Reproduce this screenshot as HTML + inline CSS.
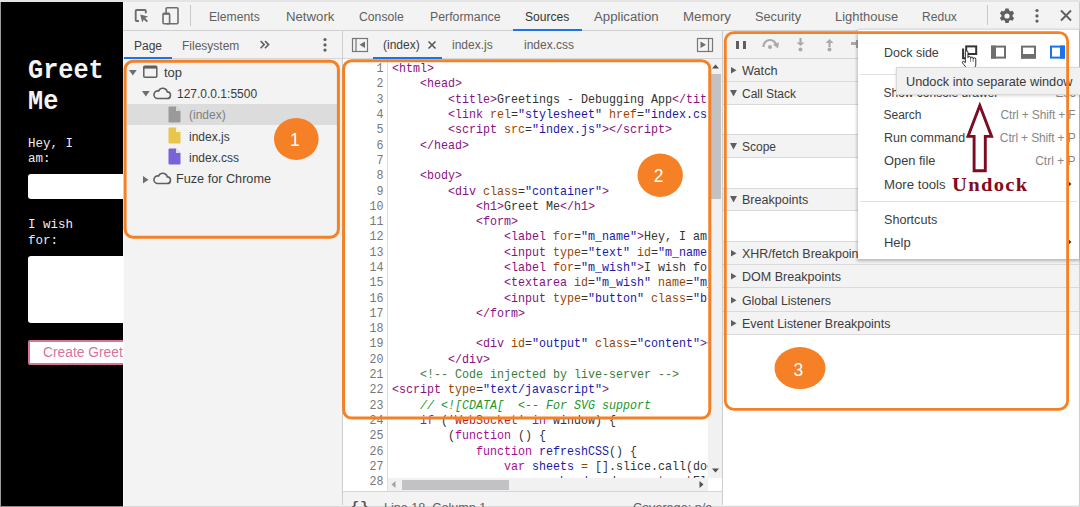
<!DOCTYPE html>
<html><head><meta charset="utf-8"><title>DevTools</title>
<style>html,body{margin:0;padding:0;} body{width:1080px;height:507px;overflow:hidden;position:relative;background:#f3f3f3;font-family:'Liberation Sans', sans-serif;}</style>
</head><body>
<div style="position:absolute;left:0px;top:0px;width:1080px;height:2px;background:#e4e4e4;"></div>
<div style="position:absolute;left:0px;top:2px;width:1px;height:505px;background:#9a9a9a;"></div>
<div style="position:absolute;left:1px;top:2px;width:122px;height:505px;background:#000;"></div>
<div style="position:absolute;left:28px;top:55.58px;font-family:'Liberation Mono', monospace;font-size:27px;line-height:31.05px;color:#f4f4f4;font-weight:bold;white-space:pre;transform:scaleX(0.935);transform-origin:0 0;">Greet</div>
<div style="position:absolute;left:28px;top:87.08px;font-family:'Liberation Mono', monospace;font-size:27px;line-height:31.05px;color:#f4f4f4;font-weight:bold;white-space:pre;transform:scaleX(0.935);transform-origin:0 0;">Me</div>
<div style="position:absolute;left:28px;top:136.78px;font-family:'Liberation Mono', monospace;font-size:12.5px;line-height:14.37px;color:#eee;font-weight:normal;white-space:pre;">Hey, I</div>
<div style="position:absolute;left:28px;top:152.48px;font-family:'Liberation Mono', monospace;font-size:12.5px;line-height:14.37px;color:#eee;font-weight:normal;white-space:pre;">am:</div>
<div style="position:absolute;left:28px;top:174px;width:100px;height:25px;background:#fff;border-radius:3px;"></div>
<div style="position:absolute;left:28px;top:218.48px;font-family:'Liberation Mono', monospace;font-size:12.5px;line-height:14.37px;color:#eee;font-weight:normal;white-space:pre;">I wish</div>
<div style="position:absolute;left:28px;top:234.18px;font-family:'Liberation Mono', monospace;font-size:12.5px;line-height:14.37px;color:#eee;font-weight:normal;white-space:pre;">for:</div>
<div style="position:absolute;left:28px;top:256px;width:100px;height:67px;background:#fff;border-radius:3px;"></div>
<div style="position:absolute;left:28px;top:340px;width:110px;height:25px;box-sizing:border-box;border:2px solid #d9739a;border-radius:2px;background:#fff;"></div>
<div style="position:absolute;left:43px;top:345.08px;font-family:'Liberation Sans', sans-serif;font-size:13.8px;line-height:15.87px;color:#d9739a;font-weight:normal;white-space:pre;">Create Greeting</div>
<div style="position:absolute;left:123px;top:2px;width:957px;height:505px;background:#f3f3f3;"></div>
<div style="position:absolute;left:123px;top:2px;width:1px;height:504px;background:#fafafa;"></div>
<div style="position:absolute;left:123px;top:30px;width:957px;height:1px;background:#d0d0d0;"></div>
<div style="position:absolute;left:1079px;top:2px;width:1px;height:505px;background:#cfcfcf;"></div>
<div style="position:absolute;left:123px;top:506px;width:957px;height:1px;background:#d9d9d9;"></div>
<div style="position:absolute;left:0px;top:506px;width:123px;height:1px;background:#8a8a8a;"></div>
<svg style="position:absolute;left:133px;top:8px;" width="18" height="17" viewBox="0 0 18 17"><path d="M6 13H3.7a1 1 0 0 1-1-1V3a1 1 0 0 1 1-1h8.1a1 1 0 0 1 1 1v2.2" fill="none" stroke="#6e6e6e" stroke-width="1.9"/><path d="M7.2 6.6L15.1 8.5 12.2 10.1 15 12.9 13.6 14.3 10.8 11.5 9.2 14.5z" fill="#6e6e6e"/></svg>
<svg style="position:absolute;left:161px;top:6px;" width="19" height="19" viewBox="0 0 19 19"><rect x="5.1" y="1.8" width="11.9" height="16" rx="1" fill="none" stroke="#6e6e6e" stroke-width="1.6"/><rect x="2" y="7.4" width="6.6" height="10.4" rx="1" fill="#f3f3f3" stroke="#6e6e6e" stroke-width="1.6"/><rect x="2" y="7.2" width="6.6" height="1.6" fill="#6e6e6e"/></svg>
<div style="position:absolute;left:190px;top:5px;width:1px;height:21px;background:#c8c8c8;"></div>
<div style="position:absolute;left:209.29999999999998px;top:10.64px;font-family:'Liberation Sans', sans-serif;font-size:12px;line-height:13.8px;color:#5f5f5f;font-weight:normal;white-space:pre;transform:scaleX(1.014);transform-origin:0 0;">Elements</div>
<div style="position:absolute;left:285.7px;top:10.64px;font-family:'Liberation Sans', sans-serif;font-size:12px;line-height:13.8px;color:#5f5f5f;font-weight:normal;white-space:pre;transform:scaleX(1.100);transform-origin:0 0;">Network</div>
<div style="position:absolute;left:358.9px;top:10.64px;font-family:'Liberation Sans', sans-serif;font-size:12px;line-height:13.8px;color:#5f5f5f;font-weight:normal;white-space:pre;transform:scaleX(1.018);transform-origin:0 0;">Console</div>
<div style="position:absolute;left:429.5px;top:10.64px;font-family:'Liberation Sans', sans-serif;font-size:12px;line-height:13.8px;color:#5f5f5f;font-weight:normal;white-space:pre;transform:scaleX(1.026);transform-origin:0 0;">Performance</div>
<div style="position:absolute;left:524.6px;top:10.64px;font-family:'Liberation Sans', sans-serif;font-size:12px;line-height:13.8px;color:#333;font-weight:normal;white-space:pre;transform:scaleX(1.007);transform-origin:0 0;">Sources</div>
<div style="position:absolute;left:593.6px;top:10.64px;font-family:'Liberation Sans', sans-serif;font-size:12px;line-height:13.8px;color:#5f5f5f;font-weight:normal;white-space:pre;transform:scaleX(1.100);transform-origin:0 0;">Application</div>
<div style="position:absolute;left:683.2px;top:10.64px;font-family:'Liberation Sans', sans-serif;font-size:12px;line-height:13.8px;color:#5f5f5f;font-weight:normal;white-space:pre;transform:scaleX(1.107);transform-origin:0 0;">Memory</div>
<div style="position:absolute;left:754.9000000000001px;top:10.64px;font-family:'Liberation Sans', sans-serif;font-size:12px;line-height:13.8px;color:#5f5f5f;font-weight:normal;white-space:pre;transform:scaleX(1.062);transform-origin:0 0;">Security</div>
<div style="position:absolute;left:834.8000000000001px;top:10.64px;font-family:'Liberation Sans', sans-serif;font-size:12px;line-height:13.8px;color:#5f5f5f;font-weight:normal;white-space:pre;transform:scaleX(1.077);transform-origin:0 0;">Lighthouse</div>
<div style="position:absolute;left:922.2px;top:10.64px;font-family:'Liberation Sans', sans-serif;font-size:12px;line-height:13.8px;color:#5f5f5f;font-weight:normal;white-space:pre;transform:scaleX(1.006);transform-origin:0 0;">Redux</div>
<div style="position:absolute;left:513px;top:29px;width:69px;height:2px;background:#1a73e8;"></div>
<div style="position:absolute;left:987px;top:5px;width:1px;height:20px;background:#c8c8c8;"></div>
<svg style="position:absolute;left:998px;top:7px;" width="18" height="18" viewBox="0 0 18 18"><g transform="translate(9,9)"><path fill="#5f5f5f" d="M-1.6-7.5h3.2l.5 2.1a5 5 0 0 1 1.4.8l2-.7 1.6 2.8-1.6 1.4a5 5 0 0 1 0 1.6l1.6 1.4-1.6 2.8-2-.7a5 5 0 0 1-1.4.8l-.5 2.1h-3.2l-.5-2.1a5 5 0 0 1-1.4-.8l-2 .7-1.6-2.8 1.6-1.4a5 5 0 0 1 0-1.6l-1.6-1.4 1.6-2.8 2 .7a5 5 0 0 1 1.4-.8z"/><circle r="2.6" fill="#f3f3f3"/></g></svg>
<svg style="position:absolute;left:1034px;top:8px;" width="6" height="16" viewBox="0 0 6 16"><circle cx="3" cy="2.5" r="1.6" fill="#5f5f5f"/><circle cx="3" cy="7.9" r="1.6" fill="#5f5f5f"/><circle cx="3" cy="13.1" r="1.6" fill="#5f5f5f"/></svg>
<svg style="position:absolute;left:1059px;top:9px;" width="14" height="14" viewBox="0 0 14 14"><path d="M2 1.5l10 10M12 1.5l-10 10" stroke="#5f5f5f" stroke-width="1.9"/></svg>
<div style="position:absolute;left:123px;top:58px;width:219px;height:1px;background:#d6d6d6;"></div>
<div style="position:absolute;left:342px;top:30px;width:1px;height:475px;background:#cdcdcd;"></div>
<div style="position:absolute;left:134px;top:39.74px;font-family:'Liberation Sans', sans-serif;font-size:12px;line-height:13.8px;color:#3d3d3d;font-weight:normal;white-space:pre;">Page</div>
<div style="position:absolute;left:182px;top:39.74px;font-family:'Liberation Sans', sans-serif;font-size:12px;line-height:13.8px;color:#5f5f5f;font-weight:normal;white-space:pre;">Filesystem</div>
<svg style="position:absolute;left:258px;top:39px;" width="14" height="12" viewBox="0 0 14 12"><path d="M2.6 2l3.6 3.6-3.6 3.6M7 2l3.6 3.6-3.6 3.6" fill="none" stroke="#5f5f5f" stroke-width="1.6"/></svg>
<svg style="position:absolute;left:322px;top:37px;" width="6" height="16" viewBox="0 0 6 16"><circle cx="3" cy="2.5" r="1.6" fill="#5f5f5f"/><circle cx="3" cy="7.9" r="1.6" fill="#5f5f5f"/><circle cx="3" cy="13.1" r="1.6" fill="#5f5f5f"/></svg>
<div style="position:absolute;left:124px;top:57px;width:48px;height:2px;background:#1a73e8;"></div>
<svg style="position:absolute;left:129.1px;top:69.9px;" width="8.7" height="6.5" viewBox="0 0 8.7 6.5"><path d="M0 0H7.7L3.85 5.5z" fill="#6e6e6e"/></svg>
<svg style="position:absolute;left:142px;top:65px;" width="17" height="14" viewBox="0 0 17 14"><rect x="1.8" y="1.3" width="13" height="11" rx="1" fill="none" stroke="#5f5f5f" stroke-width="1.5"/><rect x="1.8" y="1" width="13" height="2.6" fill="#5f5f5f"/></svg>
<div style="position:absolute;left:163.5px;top:67.14px;font-family:'Liberation Sans', sans-serif;font-size:12px;line-height:13.8px;color:#3a3a3a;font-weight:normal;white-space:pre;transform:scaleX(1.080);transform-origin:0 0;">top</div>
<svg style="position:absolute;left:142px;top:91px;" width="8.7" height="6.5" viewBox="0 0 8.7 6.5"><path d="M0 0H7.7L3.85 5.5z" fill="#6e6e6e"/></svg>
<svg style="position:absolute;left:152px;top:87px;" width="21" height="14" viewBox="0 0 21 14"><path d="M5 11.5h10a3.3 3.3 0 0 0 .3-6.6A4.6 4.6 0 0 0 6.6 4 3.8 3.8 0 0 0 5 11.5z" fill="none" stroke="#5f5f5f" stroke-width="1.6"/></svg>
<div style="position:absolute;left:177px;top:87.94px;font-family:'Liberation Sans', sans-serif;font-size:12px;line-height:13.8px;color:#3a3a3a;font-weight:normal;white-space:pre;">127.0.0.1:5500</div>
<div style="position:absolute;left:127px;top:104px;width:210px;height:21px;background:#dcdcdc;"></div>
<svg style="position:absolute;left:168px;top:106px;" width="14" height="17" viewBox="0 0 14 17"><path d="M0.5 1.5a1 1 0 0 1 1-1H8L12.5 5V15.5a1 1 0 0 1-1 1h-10a1 1 0 0 1-1-1z" fill="#9a999b"/><path d="M8 0.5V5H12.5z" fill="#d6d6d6"/></svg>
<div style="position:absolute;left:189px;top:109.34px;font-family:'Liberation Sans', sans-serif;font-size:12px;line-height:13.8px;color:#808080;font-weight:normal;white-space:pre;">(index)</div>
<svg style="position:absolute;left:168px;top:127px;" width="14" height="17" viewBox="0 0 14 17"><path d="M0.5 1.5a1 1 0 0 1 1-1H8L12.5 5V15.5a1 1 0 0 1-1 1h-10a1 1 0 0 1-1-1z" fill="#e8c64c"/><path d="M8 0.5V5H12.5z" fill="#fbf3d0"/></svg>
<div style="position:absolute;left:189px;top:130.64px;font-family:'Liberation Sans', sans-serif;font-size:12px;line-height:13.8px;color:#3a3a3a;font-weight:normal;white-space:pre;">index.js</div>
<svg style="position:absolute;left:168px;top:148px;" width="14" height="17" viewBox="0 0 14 17"><path d="M0.5 1.5a1 1 0 0 1 1-1H8L12.5 5V15.5a1 1 0 0 1-1 1h-10a1 1 0 0 1-1-1z" fill="#7a62d8"/><path d="M8 0.5V5H12.5z" fill="#e0d8f6"/></svg>
<div style="position:absolute;left:189px;top:151.94px;font-family:'Liberation Sans', sans-serif;font-size:12px;line-height:13.8px;color:#3a3a3a;font-weight:normal;white-space:pre;">index.css</div>
<svg style="position:absolute;left:143px;top:175.5px;" width="6.5" height="8.5" viewBox="0 0 6.5 8.5"><path d="M0 0L5.5 3.75L0 7.5z" fill="#6e6e6e"/></svg>
<svg style="position:absolute;left:152px;top:172px;" width="21" height="14" viewBox="0 0 21 14"><path d="M5 11.5h10a3.3 3.3 0 0 0 .3-6.6A4.6 4.6 0 0 0 6.6 4 3.8 3.8 0 0 0 5 11.5z" fill="none" stroke="#5f5f5f" stroke-width="1.6"/></svg>
<div style="position:absolute;left:176.4px;top:172.94px;font-family:'Liberation Sans', sans-serif;font-size:12px;line-height:13.8px;color:#3a3a3a;font-weight:normal;white-space:pre;transform:scaleX(1.055);transform-origin:0 0;">Fuze for Chrome</div>
<div style="position:absolute;left:343px;top:58px;width:379px;height:1px;background:#d6d6d6;"></div>
<svg style="position:absolute;left:351px;top:37px;" width="18" height="16" viewBox="0 0 18 16"><rect x="1.5" y="1.5" width="15" height="13" fill="none" stroke="#777" stroke-width="1.2"/><path d="M5 1.5v13" stroke="#777" stroke-width="1.2"/><path d="M14 4.5v6.5L8.5 7.75z" fill="#6e6e6e"/></svg>
<div style="position:absolute;left:383px;top:39.24px;font-family:'Liberation Sans', sans-serif;font-size:12px;line-height:13.8px;color:#3d3d3d;font-weight:normal;white-space:pre;">(index)</div>
<svg style="position:absolute;left:427px;top:40px;" width="10" height="10" viewBox="0 0 10 10"><path d="M1.5 1.5l7 7M8.5 1.5l-7 7" stroke="#555" stroke-width="1.5"/></svg>
<div style="position:absolute;left:452px;top:39.24px;font-family:'Liberation Sans', sans-serif;font-size:12px;line-height:13.8px;color:#5f5f5f;font-weight:normal;white-space:pre;">index.js</div>
<div style="position:absolute;left:524px;top:39.24px;font-family:'Liberation Sans', sans-serif;font-size:12px;line-height:13.8px;color:#5f5f5f;font-weight:normal;white-space:pre;">index.css</div>
<div style="position:absolute;left:373px;top:57px;width:69px;height:2px;background:#1a73e8;"></div>
<svg style="position:absolute;left:696px;top:37px;" width="18" height="16" viewBox="0 0 18 16"><rect x="1.5" y="1.5" width="15" height="13" fill="none" stroke="#777" stroke-width="1.2"/><path d="M12.5 1.5v13" stroke="#777" stroke-width="1.2"/><path d="M4.5 4.5v6.5L10 7.75z" fill="#6e6e6e"/></svg>
<div style="position:absolute;left:722px;top:30px;width:1px;height:475px;background:#cdcdcd;"></div>
<div style="position:absolute;left:343px;top:59px;width:379px;height:432px;background:#fff;"></div>
<div style="position:absolute;left:387px;top:59px;width:1px;height:432px;background:#dedede;"></div>
<div style="position:absolute;left:343px;top:491px;width:379px;height:1px;background:#d6d6d6;"></div>
<div style="position:absolute;left:343px;top:492px;width:379px;height:13px;background:#f3f3f3;"></div>
<div style="position:absolute;left:343px;top:61.15px;width:40.5px;text-align:right;font-family:'Liberation Mono', monospace;font-size:13.5px;line-height:15.3px;color:#787878;white-space:pre;transform:scaleX(0.8642);transform-origin:100% 0">1<br>2<br>3<br>4<br>5<br>6<br>7<br>8<br>9<br>10<br>11<br>12<br>13<br>14<br>15<br>16<br>17<br>18<br>19<br>20<br>21<br>22<br>23<br>24<br>25<br>26<br>27<br>28</div>
<div style="position:absolute;left:388px;top:59px;width:320px;height:419px;overflow:hidden"><div style="position:absolute;left:4px;top:2.15px;font-family:'Liberation Mono', monospace;font-size:13.5px;line-height:15.3px;color:#222;white-space:pre;transform:scaleX(0.8642);transform-origin:0 0"><span style="color:#881280;">&lt;html&gt;</span><br><span style="color:#333;">    </span><span style="color:#881280;">&lt;head&gt;</span><br><span style="color:#333;">        </span><span style="color:#881280;">&lt;title&gt;</span><span style="color:#333;">Greetings - Debugging App</span><span style="color:#881280;">&lt;/title&gt;</span><br><span style="color:#333;">        </span><span style="color:#881280;">&lt;link </span><span style="color:#994500;">rel</span><span style="color:#333;">=</span><span style="color:#1a1aa6;">&quot;stylesheet&quot;</span><span style="color:#333;"> </span><span style="color:#994500;">href</span><span style="color:#333;">=</span><span style="color:#1a1aa6;">&quot;index.css&quot;</span><span style="color:#881280;">&gt;</span><br><span style="color:#333;">        </span><span style="color:#881280;">&lt;script </span><span style="color:#994500;">src</span><span style="color:#333;">=</span><span style="color:#1a1aa6;">&quot;index.js&quot;</span><span style="color:#881280;">&gt;&lt;/script&gt;</span><br><span style="color:#333;">    </span><span style="color:#881280;">&lt;/head&gt;</span><br> <br><span style="color:#333;">    </span><span style="color:#881280;">&lt;body&gt;</span><br><span style="color:#333;">        </span><span style="color:#881280;">&lt;div </span><span style="color:#994500;">class</span><span style="color:#333;">=</span><span style="color:#1a1aa6;">&quot;container&quot;</span><span style="color:#881280;">&gt;</span><br><span style="color:#333;">            </span><span style="color:#881280;">&lt;h1&gt;</span><span style="color:#333;">Greet Me</span><span style="color:#881280;">&lt;/h1&gt;</span><br><span style="color:#333;">            </span><span style="color:#881280;">&lt;form&gt;</span><br><span style="color:#333;">                </span><span style="color:#881280;">&lt;label </span><span style="color:#994500;">for</span><span style="color:#333;">=</span><span style="color:#1a1aa6;">&quot;m_name&quot;</span><span style="color:#881280;">&gt;</span><span style="color:#333;">Hey, I am:</span><span style="color:#881280;">&lt;/label&gt;</span><br><span style="color:#333;">                </span><span style="color:#881280;">&lt;input </span><span style="color:#994500;">type</span><span style="color:#333;">=</span><span style="color:#1a1aa6;">&quot;text&quot;</span><span style="color:#333;"> </span><span style="color:#994500;">id</span><span style="color:#333;">=</span><span style="color:#1a1aa6;">&quot;m_name&quot;</span><span style="color:#881280;">&gt;</span><br><span style="color:#333;">                </span><span style="color:#881280;">&lt;label </span><span style="color:#994500;">for</span><span style="color:#333;">=</span><span style="color:#1a1aa6;">&quot;m_wish&quot;</span><span style="color:#881280;">&gt;</span><span style="color:#333;">I wish for:</span><span style="color:#881280;">&lt;/label&gt;</span><br><span style="color:#333;">                </span><span style="color:#881280;">&lt;textarea </span><span style="color:#994500;">id</span><span style="color:#333;">=</span><span style="color:#1a1aa6;">&quot;m_wish&quot;</span><span style="color:#333;"> </span><span style="color:#994500;">name</span><span style="color:#333;">=</span><span style="color:#1a1aa6;">&quot;m_wish&quot;</span><span style="color:#881280;">&gt;</span><br><span style="color:#333;">                </span><span style="color:#881280;">&lt;input </span><span style="color:#994500;">type</span><span style="color:#333;">=</span><span style="color:#1a1aa6;">&quot;button&quot;</span><span style="color:#333;"> </span><span style="color:#994500;">class</span><span style="color:#333;">=</span><span style="color:#1a1aa6;">&quot;btn&quot;</span><span style="color:#881280;">&gt;</span><br><span style="color:#333;">            </span><span style="color:#881280;">&lt;/form&gt;</span><br> <br><span style="color:#333;">            </span><span style="color:#881280;">&lt;div </span><span style="color:#994500;">id</span><span style="color:#333;">=</span><span style="color:#1a1aa6;">&quot;output&quot;</span><span style="color:#333;"> </span><span style="color:#994500;">class</span><span style="color:#333;">=</span><span style="color:#1a1aa6;">&quot;content&quot;</span><span style="color:#881280;">&gt;</span><span style="color:#881280;">&lt;/div&gt;</span><br><span style="color:#333;">        </span><span style="color:#881280;">&lt;/div&gt;</span><br><span style="color:#333;">    </span><span style="color:#3a7d3c;">&lt;!-- Code injected by live-server --&gt;</span><br><span style="color:#881280;">&lt;script </span><span style="color:#994500;">type</span><span style="color:#333;">=</span><span style="color:#1a1aa6;">&quot;text/javascript&quot;</span><span style="color:#881280;">&gt;</span><br><span style="color:#333;">    </span><span style="color:#23942a;font-style:italic">// &lt;![CDATA[  &lt;-- For SVG support</span><br><span style="color:#333;">    </span><span style="color:#aa0d91;">if</span><span style="color:#333;"> (</span><span style="color:#c41a16;">&#x27;WebSocket&#x27;</span><span style="color:#333;"> </span><span style="color:#aa0d91;">in</span><span style="color:#333;"> window) {</span><br><span style="color:#333;">        (</span><span style="color:#aa0d91;">function</span><span style="color:#333;"> () {</span><br><span style="color:#333;">            </span><span style="color:#aa0d91;">function</span><span style="color:#333;"> </span><span style="color:#1a1aa6;">refreshCSS</span><span style="color:#333;">() {</span><br><span style="color:#333;">                </span><span style="color:#aa0d91;">var</span><span style="color:#333;"> </span><span style="color:#1a1aa6;">sheets</span><span style="color:#333;"> </span><span style="color:#994500;">=</span><span style="color:#333;"> [].slice.call(document.getElementsByTagName(</span><span style="color:#c41a16;">&quot;link&quot;</span><span style="color:#333;">));</span><br><span style="color:#333;">                    </span><span style="color:#aa0d91;">var</span><span style="color:#333;"> </span><span style="color:#1a1aa6;">head</span><span style="color:#333;"> </span><span style="color:#994500;">=</span><span style="color:#333;"> document.getElementsByTagName(</span><span style="color:#c41a16;">&quot;head&quot;</span><span style="color:#333;">)[0];</span></div></div>
<div style="position:absolute;left:708px;top:59px;width:14px;height:419px;background:#f1f1f1;"></div>
<div style="position:absolute;left:711px;top:74px;width:10px;height:125px;background:#c2c1c4;"></div>
<svg style="position:absolute;left:712px;top:64px;" width="7" height="5" viewBox="0 0 7 5"><path d="M0 4.5L3.5 0.5 7 4.5z" fill="#505050"/></svg>
<svg style="position:absolute;left:712px;top:468px;" width="7" height="5" viewBox="0 0 7 5"><path d="M0 0.5L3.5 4.5 7 0.5z" fill="#505050"/></svg>
<div style="position:absolute;left:388px;top:478px;width:320px;height:13px;background:#f1f1f1;"></div>
<div style="position:absolute;left:402px;top:480px;width:106.5px;height:10px;background:#c2c1c4;"></div>
<svg style="position:absolute;left:391px;top:481px;" width="5" height="7" viewBox="0 0 5 7"><path d="M4.5 0L0.5 3.5 4.5 7z" fill="#a3a3a3"/></svg>
<svg style="position:absolute;left:699px;top:481px;" width="5" height="7" viewBox="0 0 5 7"><path d="M0.5 0L4.5 3.5 0.5 7z" fill="#505050"/></svg>
<div style="position:absolute;left:708px;top:478px;width:14px;height:13px;background:#fff;"></div>
<div style="position:absolute;left:351px;top:498.94px;font-family:'Liberation Mono', monospace;font-size:13.5px;line-height:15.52px;color:#555;font-weight:bold;white-space:pre;letter-spacing:1.2px;">{}</div>
<div style="position:absolute;left:384px;top:501.94px;font-family:'Liberation Sans', sans-serif;font-size:12px;line-height:13.8px;color:#5f5f5f;font-weight:normal;white-space:pre;transform:scaleX(1.050);transform-origin:0 0;">Line 18, Column 1</div>
<div style="position:absolute;left:632.5px;top:501.94px;font-family:'Liberation Sans', sans-serif;font-size:12px;line-height:13.8px;color:#5f5f5f;font-weight:normal;white-space:pre;transform:scaleX(1.050);transform-origin:0 0;">Coverage: n/a</div>
<div style="position:absolute;left:736px;top:40.7px;width:3px;height:8px;background:#5f5f5f;"></div>
<div style="position:absolute;left:742.5px;top:40.7px;width:3px;height:8px;background:#5f5f5f;"></div>
<svg style="position:absolute;left:760px;top:37px;" width="22" height="14" viewBox="0 0 22 14"><path d="M3.5 10a6.5 6.5 0 0 1 13-1" fill="none" stroke="#aaa" stroke-width="2.2"/><path d="M13 7.5l5 4 1-6z" fill="#aaa"/><circle cx="10" cy="10" r="2" fill="#aaa"/></svg>
<svg style="position:absolute;left:795px;top:37px;" width="11" height="16" viewBox="0 0 11 16"><path d="M5.5 1v6" stroke="#aaa" stroke-width="2.2"/><path d="M1.5 5.5h8l-4 3.5z" fill="#aaa"/><circle cx="5.5" cy="12.6" r="2" fill="#aaa"/></svg>
<svg style="position:absolute;left:824px;top:37px;" width="11" height="16" viewBox="0 0 11 16"><path d="M5.5 10V4" stroke="#aaa" stroke-width="2.2"/><path d="M1.5 6h8l-4-4z" fill="#aaa"/><circle cx="5.5" cy="12.6" r="2" fill="#aaa"/></svg>
<div style="position:absolute;left:851.4px;top:42px;width:5px;height:3px;background:#aaa;"></div>
<div style="position:absolute;left:856px;top:40.2px;width:2px;height:7.5px;background:#a0a0a0;"></div>
<div style="position:absolute;left:723px;top:58px;width:356px;height:1px;background:#d6d6d6;"></div>
<div style="position:absolute;left:723px;top:81px;width:356px;height:1px;background:#dadada;"></div>
<svg style="position:absolute;left:731px;top:67px;" width="6.5" height="7.5" viewBox="0 0 6.5 7.5"><path d="M0 0L5.5 3.25L0 6.5z" fill="#5f5f5f"/></svg>
<div style="position:absolute;left:742px;top:64.64px;font-family:'Liberation Sans', sans-serif;font-size:12px;line-height:13.8px;color:#3d3d3d;font-weight:normal;white-space:pre;transform:scaleX(1.060);transform-origin:0 0;">Watch</div>
<div style="position:absolute;left:723px;top:104px;width:356px;height:1px;background:#dadada;"></div>
<svg style="position:absolute;left:730.3px;top:90px;" width="8" height="7.5" viewBox="0 0 8 7.5"><path d="M0 0H7L3.5 6.5z" fill="#5f5f5f"/></svg>
<div style="position:absolute;left:723px;top:105px;width:356px;height:29px;background:#fff;"></div>
<div style="position:absolute;left:723px;top:134px;width:356px;height:1px;background:#dadada;"></div>
<div style="position:absolute;left:742px;top:87.64px;font-family:'Liberation Sans', sans-serif;font-size:12px;line-height:13.8px;color:#3d3d3d;font-weight:normal;white-space:pre;">Call Stack</div>
<div style="position:absolute;left:723px;top:157px;width:356px;height:1px;background:#dadada;"></div>
<svg style="position:absolute;left:730.3px;top:143px;" width="8" height="7.5" viewBox="0 0 8 7.5"><path d="M0 0H7L3.5 6.5z" fill="#5f5f5f"/></svg>
<div style="position:absolute;left:723px;top:158px;width:356px;height:30px;background:#fff;"></div>
<div style="position:absolute;left:723px;top:188px;width:356px;height:1px;background:#dadada;"></div>
<div style="position:absolute;left:742px;top:140.64px;font-family:'Liberation Sans', sans-serif;font-size:12px;line-height:13.8px;color:#3d3d3d;font-weight:normal;white-space:pre;">Scope</div>
<div style="position:absolute;left:723px;top:210px;width:356px;height:1px;background:#dadada;"></div>
<svg style="position:absolute;left:730.3px;top:196px;" width="8" height="7.5" viewBox="0 0 8 7.5"><path d="M0 0H7L3.5 6.5z" fill="#5f5f5f"/></svg>
<div style="position:absolute;left:723px;top:211px;width:356px;height:30px;background:#fff;"></div>
<div style="position:absolute;left:723px;top:241px;width:356px;height:1px;background:#dadada;"></div>
<div style="position:absolute;left:742px;top:193.64px;font-family:'Liberation Sans', sans-serif;font-size:12px;line-height:13.8px;color:#3d3d3d;font-weight:normal;white-space:pre;transform:scaleX(1.045);transform-origin:0 0;">Breakpoints</div>
<div style="position:absolute;left:723px;top:264px;width:356px;height:1px;background:#dadada;"></div>
<svg style="position:absolute;left:731px;top:250px;" width="6.5" height="7.5" viewBox="0 0 6.5 7.5"><path d="M0 0L5.5 3.25L0 6.5z" fill="#5f5f5f"/></svg>
<div style="position:absolute;left:742px;top:247.64px;font-family:'Liberation Sans', sans-serif;font-size:12px;line-height:13.8px;color:#3d3d3d;font-weight:normal;white-space:pre;transform:scaleX(1.040);transform-origin:0 0;">XHR/fetch Breakpoints</div>
<div style="position:absolute;left:723px;top:287px;width:356px;height:1px;background:#dadada;"></div>
<svg style="position:absolute;left:731px;top:273px;" width="6.5" height="7.5" viewBox="0 0 6.5 7.5"><path d="M0 0L5.5 3.25L0 6.5z" fill="#5f5f5f"/></svg>
<div style="position:absolute;left:742px;top:270.64px;font-family:'Liberation Sans', sans-serif;font-size:12px;line-height:13.8px;color:#3d3d3d;font-weight:normal;white-space:pre;transform:scaleX(1.045);transform-origin:0 0;">DOM Breakpoints</div>
<div style="position:absolute;left:723px;top:311px;width:356px;height:1px;background:#dadada;"></div>
<svg style="position:absolute;left:731px;top:297px;" width="6.5" height="7.5" viewBox="0 0 6.5 7.5"><path d="M0 0L5.5 3.25L0 6.5z" fill="#5f5f5f"/></svg>
<div style="position:absolute;left:742px;top:294.64px;font-family:'Liberation Sans', sans-serif;font-size:12px;line-height:13.8px;color:#3d3d3d;font-weight:normal;white-space:pre;transform:scaleX(1.025);transform-origin:0 0;">Global Listeners</div>
<div style="position:absolute;left:723px;top:334px;width:356px;height:1px;background:#dadada;"></div>
<svg style="position:absolute;left:731px;top:320px;" width="6.5" height="7.5" viewBox="0 0 6.5 7.5"><path d="M0 0L5.5 3.25L0 6.5z" fill="#5f5f5f"/></svg>
<div style="position:absolute;left:742px;top:317.64px;font-family:'Liberation Sans', sans-serif;font-size:12px;line-height:13.8px;color:#3d3d3d;font-weight:normal;white-space:pre;transform:scaleX(1.035);transform-origin:0 0;">Event Listener Breakpoints</div>
<div style="position:absolute;left:723px;top:335px;width:356px;height:170px;background:#fff;"></div>
<div style="position:absolute;left:858px;top:30px;width:221px;height:229px;background:#fff;box-shadow:0 1px 3px 1px rgba(0,0,0,0.25);"></div>
<div style="position:absolute;left:883.5px;top:47.04px;font-family:'Liberation Sans', sans-serif;font-size:12px;line-height:13.8px;color:#3d3d3d;font-weight:normal;white-space:pre;transform:scaleX(1.040);transform-origin:0 0;">Dock side</div>
<svg style="position:absolute;left:961px;top:44px;" width="18" height="16" viewBox="0 0 18 16"><rect x="5.2" y="2.4" width="10" height="7.6" fill="none" stroke="#333" stroke-width="2"/><path d="M2.1 4.5v9.8h5" fill="none" stroke="#333" stroke-width="2"/></svg>
<svg style="position:absolute;left:990px;top:44px;" width="17" height="16" viewBox="0 0 17 16"><rect x="2" y="2.6" width="13" height="11" fill="none" stroke="#6e6e6e" stroke-width="2"/><rect x="1" y="1.6" width="5" height="13" fill="#6e6e6e"/></svg>
<svg style="position:absolute;left:1019.5px;top:44px;" width="17" height="16" viewBox="0 0 17 16"><rect x="2" y="2.6" width="13" height="11" fill="none" stroke="#6e6e6e" stroke-width="2"/><rect x="1" y="10" width="15" height="4.6" fill="#6e6e6e"/></svg>
<svg style="position:absolute;left:1049px;top:44px;" width="17" height="16" viewBox="0 0 17 16"><rect x="2" y="2.6" width="13" height="11" fill="none" stroke="#1a73e8" stroke-width="2"/><rect x="11" y="1.6" width="5" height="13" fill="#1a73e8"/></svg>
<svg style="position:absolute;left:960.5px;top:49.5px;" width="17" height="21" viewBox="0 0 17 21"><g transform="scale(0.87,0.855)"><path d="M5 2.6a1.5 1.5 0 0 1 3 0V9a1.5 1.5 0 0 1 3 0v.8a1.5 1.5 0 0 1 3 0v.8a1.5 1.5 0 0 1 3 0V16.5c0 2.6-1.2 4.4-2.6 5.3H7.2C6 20.6 3.6 17.6 1.8 15.2 1 14 2.1 12.6 3.4 13.5L5 14.8z" fill="#fff" stroke="#222" stroke-width="1.1" stroke-linejoin="round"/><path d="M11 9.8v4M14 10.6v3.4" stroke="#444" stroke-width="0.8"/></g></svg>
<div style="position:absolute;left:860px;top:74px;width:217px;height:1px;background:#e2e2e2;"></div>
<div style="position:absolute;left:883.5px;top:86.74px;font-family:'Liberation Sans', sans-serif;font-size:12px;line-height:13.8px;color:#3d3d3d;font-weight:normal;white-space:pre;">Show console drawer</div>
<div style="position:absolute;left:0px;top:86.74px;font-family:'Liberation Sans', sans-serif;font-size:12px;line-height:13.8px;color:#888;font-weight:normal;white-space:pre;left:auto;right:4.5px;">Esc</div>
<div style="position:absolute;left:883.5px;top:109.24px;font-family:'Liberation Sans', sans-serif;font-size:12px;line-height:13.8px;color:#3d3d3d;font-weight:normal;white-space:pre;">Search</div>
<div style="position:absolute;left:883.5px;top:132.44px;font-family:'Liberation Sans', sans-serif;font-size:12px;line-height:13.8px;color:#3d3d3d;font-weight:normal;white-space:pre;transform:scaleX(1.040);transform-origin:0 0;">Run command</div>
<div style="position:absolute;left:883.5px;top:155.34px;font-family:'Liberation Sans', sans-serif;font-size:12px;line-height:13.8px;color:#3d3d3d;font-weight:normal;white-space:pre;transform:scaleX(1.070);transform-origin:0 0;">Open file</div>
<div style="position:absolute;left:883.5px;top:179.14px;font-family:'Liberation Sans', sans-serif;font-size:12px;line-height:13.8px;color:#3d3d3d;font-weight:normal;white-space:pre;transform:scaleX(1.100);transform-origin:0 0;">More tools</div>
<div style="position:absolute;left:0px;top:109.24px;font-family:'Liberation Sans', sans-serif;font-size:12px;line-height:13.8px;color:#888;font-weight:normal;white-space:pre;left:auto;right:4.5px;letter-spacing:-0.15px;">Ctrl + Shift + F</div>
<div style="position:absolute;left:0px;top:132.44px;font-family:'Liberation Sans', sans-serif;font-size:12px;line-height:13.8px;color:#888;font-weight:normal;white-space:pre;left:auto;right:4.5px;letter-spacing:-0.15px;">Ctrl + Shift + P</div>
<div style="position:absolute;left:0px;top:155.34px;font-family:'Liberation Sans', sans-serif;font-size:12px;line-height:13.8px;color:#888;font-weight:normal;white-space:pre;left:auto;right:4.5px;">Ctrl + P</div>
<svg style="position:absolute;left:1068px;top:181px;" width="4" height="6" viewBox="0 0 4 6"><path d="M0 0l3.5 3-3.5 3z" fill="#333"/></svg>
<div style="position:absolute;left:860px;top:201px;width:217px;height:1px;background:#e2e2e2;"></div>
<div style="position:absolute;left:883.5px;top:213.74px;font-family:'Liberation Sans', sans-serif;font-size:12px;line-height:13.8px;color:#3d3d3d;font-weight:normal;white-space:pre;transform:scaleX(1.050);transform-origin:0 0;">Shortcuts</div>
<div style="position:absolute;left:883.5px;top:236.64px;font-family:'Liberation Sans', sans-serif;font-size:12px;line-height:13.8px;color:#3d3d3d;font-weight:normal;white-space:pre;transform:scaleX(1.080);transform-origin:0 0;">Help</div>
<svg style="position:absolute;left:1068px;top:238.5px;" width="4" height="6" viewBox="0 0 4 6"><path d="M0 0l3.5 3-3.5 3z" fill="#333"/></svg>
<div style="position:absolute;left:895.5px;top:67px;width:200px;height:28px;box-sizing:border-box;background:#f1f1f2;border:1px solid #d9d9d9;box-shadow:0 1px 3px rgba(0,0,0,0.15);"></div>
<div style="position:absolute;left:905.5px;top:75.42px;font-family:'Liberation Sans', sans-serif;font-size:13px;line-height:14.95px;color:#3a3a3a;font-weight:normal;white-space:pre;transform:scaleX(0.980);transform-origin:0 0;">Undock into separate window</div>
<svg style="position:absolute;left:0px;top:0px;pointer-events:none" width="1080" height="507" viewBox="0 0 1080 507">
<rect x="125.1" y="61.3" width="213.3" height="175.9" rx="8" fill="none" stroke="#f58025" stroke-width="3"/>
<rect x="343.6" y="60.7" width="366.2" height="357.4" rx="8" fill="none" stroke="#f58025" stroke-width="3"/>
<rect x="725.3" y="32.6" width="342.3" height="376.7" rx="8.5" fill="none" stroke="#f58025" stroke-width="2.8"/>
<ellipse cx="296.3" cy="138.9" rx="22.3" ry="21" fill="#f58025"/>
<ellipse cx="660.2" cy="175.2" rx="22.7" ry="21.7" fill="#f58025"/>
<ellipse cx="800" cy="368.1" rx="25.5" ry="21" fill="#f58025"/>
<path d="M979.8 105.6 L991.6 136.4 H985.3 V170.8 H974.1 V136.4 H968 Z" fill="none" stroke="#7d0b22" stroke-width="2.9" stroke-linejoin="miter" stroke-miterlimit="6"/>
</svg>
<div style="position:absolute;left:279.9px;top:129.5px;width:30px;height:20px;text-align:center;font-family:'Liberation Sans', sans-serif;font-size:17.5px;line-height:20px;color:#fff">1</div>
<div style="position:absolute;left:643.7px;top:165.6px;width:30px;height:20px;text-align:center;font-family:'Liberation Sans', sans-serif;font-size:17.5px;line-height:20px;color:#fff">2</div>
<div style="position:absolute;left:783.4px;top:359.7px;width:30px;height:20px;text-align:center;font-family:'Liberation Sans', sans-serif;font-size:17.5px;line-height:20px;color:#fff">3</div>
<div style="position:absolute;left:952px;top:174.46px;font-family:'Liberation Serif', serif;font-size:19px;line-height:21.85px;color:#820a24;font-weight:bold;white-space:pre;letter-spacing:1.2px;transform:scaleX(1.085);transform-origin:0 0;">Undock</div>
</body></html>
